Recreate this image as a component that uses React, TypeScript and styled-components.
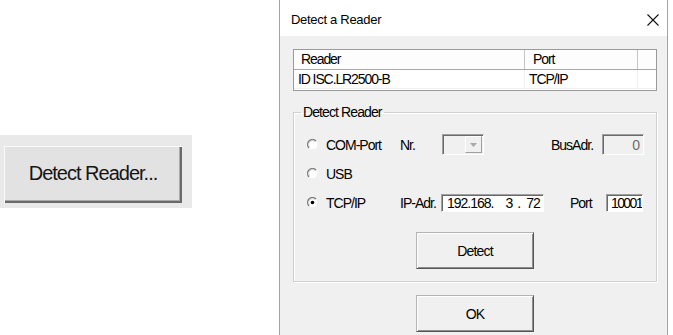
import React from 'react';
import styled, { createGlobalStyle } from 'styled-components';

const GlobalStyle = createGlobalStyle`
  body {
    margin: 0;
    background: #fff;
    font-family: "Liberation Sans", Arial, sans-serif;
  }
`;

const Page = styled.div`
  display: flex;
  height: 335px;
  overflow: hidden;
`;

const LeftPane = styled.div`
  width: 279px;
  flex: none;
  padding-top: 135px;
  box-sizing: border-box;
`;

const ButtonPanel = styled.div`
  width: 192px;
  height: 73px;
  background: #e9e9e9;
  padding: 11px 0 0 4px;
  box-sizing: border-box;
`;

const BigButton = styled.button`
  width: 178px;
  height: 57px;
  padding: 0 0 2px;
  border: none;
  background: #e2e2e2;
  box-shadow: inset 1px 1px #fafafa, inset -2px -2px #6a6a6a, inset -3px -3px #a9a9a9;
  font-family: "Liberation Sans", Arial, sans-serif;
  font-size: 20px;
  letter-spacing: -1px;
  color: #151515;
`;

const Dialog = styled.div`
  width: 389px;
  flex: none;
  box-sizing: border-box;
  border-left: 1px solid #a3a3a3;
  border-right: 1px solid #a3a3a3;
  background: #f0f0f0;
  display: flex;
  flex-direction: column;
`;

const TitleBar = styled.div`
  height: 36px;
  flex: none;
  background: #fff;
  display: flex;
  align-items: center;
  justify-content: space-between;
  padding: 3px 8px 0 11px;
  box-sizing: border-box;
  font-size: 13px;
  letter-spacing: -0.3px;
  color: #000;
`;

const Body = styled.div`
  padding: 13px 10px 0 13px;
  display: flex;
  flex-direction: column;
  font-size: 14px;
  letter-spacing: -1px;
  color: #000;
`;

const ListView = styled.div`
  height: 42px;
  box-sizing: border-box;
  border: 1px solid #9a9a9a;
  background: #fff;
  letter-spacing: -1.1px;
`;

const ListRow = styled.div<{ $head?: boolean }>`
  display: flex;
  height: ${p => (p.$head ? 20 : 19)}px;
  box-sizing: border-box;
  border-bottom: 1px solid ${p => (p.$head ? '#a8a8a8' : '#f0f0f0')};
  background: ${p => (p.$head ? '#fdfdfd' : '#fff')};
`;

const ListCell = styled.div<{ $w?: number; $pad: number; $head?: boolean }>`
  ${p => (p.$w ? `width: ${p.$w}px;` : 'flex: 1;')}
  box-sizing: border-box;
  padding-left: ${p => p.$pad}px;
  border-right: 1px solid ${p => (p.$head ? '#c4c4c4' : '#f0f0f0')};
  line-height: ${p => (p.$head ? 19 : 18)}px;
  white-space: nowrap;
  &:last-child {
    border-right: none;
  }
`;

const GroupBox = styled.fieldset`
  margin: 13px 0 0;
  padding: 0;
  border: 1px solid #d0d0d0;
  box-shadow: inset 1px 1px #fff, 1px 1px #fff;
`;

const Legend = styled.legend`
  margin-left: 7px;
  padding: 0 2px;
  line-height: 16px;
  letter-spacing: -0.9px;
`;

const GroupInner = styled.div`
  display: flex;
  flex-direction: column;
  gap: 8px;
  padding: 14px 0 12px;
`;

const Row = styled.div`
  display: flex;
  align-items: center;
  height: 21px;
  padding-left: 13px;
`;

const Label = styled.span<{ $w: number; $ml?: number }>`
  width: ${p => p.$w}px;
  margin-left: ${p => p.$ml || 0}px;
  flex: none;
  white-space: nowrap;
`;

const Field = styled.div<{ $w: number; $h: number; $disabled?: boolean; $right?: boolean; $tight?: boolean }>`
  width: ${p => p.$w}px;
  height: ${p => p.$h}px;
  flex: none;
  box-sizing: border-box;
  border-top: 1px solid #a0a0a0;
  border-left: 1px solid #a0a0a0;
  border-right: 1px solid #fff;
  border-bottom: 1px solid #fff;
  box-shadow: inset 1px 1px #696969;
  background: ${p => (p.$disabled ? '#f0f0f0' : '#fff')};
  color: ${p => (p.$disabled ? '#6d6d6d' : '#000')};
  display: flex;
  align-items: center;
  justify-content: ${p => (p.$right ? 'flex-end' : 'flex-start')};
  padding: ${p => (p.$tight ? '0 1px 0 4px' : '0 4px 0 5px')};
  letter-spacing: ${p => (p.$tight ? -1.6 : -1)}px;
  white-space: nowrap;
  overflow: hidden;
`;

const IpPart = styled.span<{ $ml?: number }>`
  margin-left: ${p => p.$ml || 0}px;
`;

const Combo = styled(Field)`
  padding: 1px 1px 1px 0;
  justify-content: flex-end;
  align-items: stretch;
`;

const ComboButton = styled.div`
  width: 17px;
  box-sizing: border-box;
  border-top: 1px solid #fff;
  border-left: 1px solid #fff;
  border-right: 1px solid #a0a0a0;
  border-bottom: 1px solid #a0a0a0;
  display: flex;
  align-items: center;
  justify-content: center;
`;

const PushButton = styled.button<{ $mt: number }>`
  align-self: center;
  width: 118px;
  height: 37px;
  margin-top: ${p => p.$mt}px;
  padding: 0;
  box-sizing: border-box;
  background: #f0f0f0;
  border-top: 1px solid #b4b4b4;
  border-left: 1px solid #b4b4b4;
  border-right: 1px solid #555;
  border-bottom: 1px solid #555;
  box-shadow: inset 1px 1px #fff, inset -1px -1px #8e8e8e;
  font-family: "Liberation Sans", Arial, sans-serif;
  font-size: 14px;
  letter-spacing: -0.8px;
  color: #000;
`;

function Radio({ checked }: { checked?: boolean }) {
  return (
    <svg width="11" height="11" viewBox="0 0 11 11" style={{ flex: 'none', marginRight: 8 }}>
      <circle cx="5.5" cy="5.5" r="4.8" fill="#fff" />
      <path d="M9 2 A4.8 4.8 0 0 0 2 9" fill="none" stroke="#7d7d7d" strokeWidth="1.3" />
      <path d="M8.2 2.8 A3.8 3.8 0 0 0 2.8 8.2" fill="none" stroke="#d0d0d0" strokeWidth="0.8" />
      {checked && <circle cx="5.5" cy="5.5" r="1.8" fill="#000" />}
    </svg>
  );
}

function CloseIcon() {
  return (
    <svg width="12" height="12" viewBox="0 0 12 12">
      <path d="M0.5 0.5 L11.5 11.5 M11.5 0.5 L0.5 11.5" stroke="#111" strokeWidth="1.1" />
    </svg>
  );
}

function ComboArrow() {
  return (
    <svg width="7" height="4" viewBox="0 0 7 4">
      <path d="M0 0 H7 L3.5 4 Z" fill="#a8a8a8" />
    </svg>
  );
}

export default function App() {
  return (
    <Page>
      <GlobalStyle />
      <LeftPane>
        <ButtonPanel>
          <BigButton>Detect Reader...</BigButton>
        </ButtonPanel>
      </LeftPane>
      <Dialog>
        <TitleBar>
          <span>Detect a Reader</span>
          <CloseIcon />
        </TitleBar>
        <Body>
          <ListView>
            <ListRow $head>
              <ListCell $head $w={231} $pad={7}>Reader</ListCell>
              <ListCell $head $w={113} $pad={8}>Port</ListCell>
              <ListCell $head $pad={0} />
            </ListRow>
            <ListRow>
              <ListCell $w={231} $pad={4}>ID ISC.LR2500-B</ListCell>
              <ListCell $w={113} $pad={4}>TCP/IP</ListCell>
              <ListCell $pad={0} />
            </ListRow>
          </ListView>
          <GroupBox>
            <Legend>Detect Reader</Legend>
            <GroupInner>
              <Row>
                <Radio />
                <Label $w={74}>COM-Port</Label>
                <Label $w={42}>Nr.</Label>
                <Combo $w={42} $h={21} $disabled>
                  <ComboButton>
                    <ComboArrow />
                  </ComboButton>
                </Combo>
                <Label $w={51} $ml={67}>BusAdr.</Label>
                <Field $w={42} $h={21} $disabled $right>0</Field>
              </Row>
              <Row>
                <Radio />
                <Label $w={74}>USB</Label>
              </Row>
              <Row>
                <Radio checked />
                <Label $w={74}>TCP/IP</Label>
                <Label $w={41}>IP-Adr.</Label>
                <Field $w={103} $h={18}>
                  <IpPart>192.168.</IpPart>
                  <IpPart $ml={12}>3</IpPart>
                  <IpPart $ml={5}>.</IpPart>
                  <IpPart $ml={6}>72</IpPart>
                </Field>
                <Label $w={36} $ml={26}>Port</Label>
                <Field $w={37} $h={18} $tight>10001</Field>
              </Row>
              <PushButton $mt={11}>Detect</PushButton>
            </GroupInner>
          </GroupBox>
          <PushButton $mt={13}>OK</PushButton>
        </Body>
      </Dialog>
    </Page>
  );
}
